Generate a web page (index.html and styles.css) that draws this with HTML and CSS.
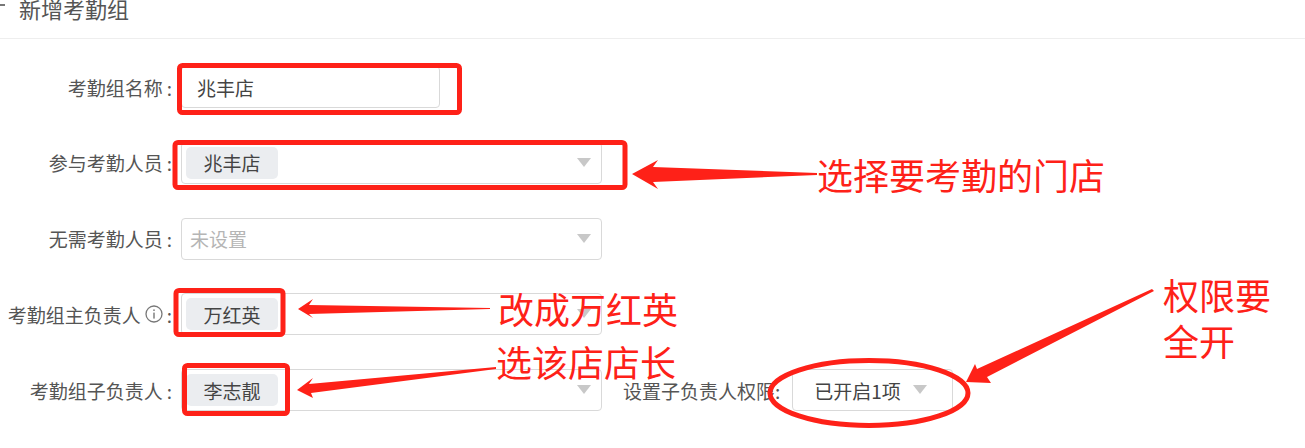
FILE: index.html
```html
<!DOCTYPE html>
<html lang="zh-CN">
<head>
<meta charset="utf-8">
<title>新增考勤组</title>
<link rel="stylesheet" href="styles.css">
</head>
<body>
<div class="page">
  <header class="head"><span class="back"></span><h1 class="title">新增考勤组</h1></header>
  <form class="form">
    <div class="row">
      <div class="label">考勤组名称<span class="colon">:</span></div>
      <div class="field input"><span class="value">兆丰店</span></div>
    </div>
    <div class="row">
      <div class="label">参与考勤人员<span class="colon">:</span></div>
      <div class="field select"><span class="tag">兆丰店</span><span class="caret"></span></div>
    </div>
    <div class="row">
      <div class="label">无需考勤人员<span class="colon">:</span></div>
      <div class="field select"><span class="placeholder">未设置</span><span class="caret"></span></div>
    </div>
    <div class="row">
      <div class="label">考勤组主负责人<svg class="info" viewBox="0 0 18 18" width="18" height="18"><circle cx="9" cy="9" r="8" fill="none" stroke="#777" stroke-width="1.3"/><rect x="8.3" y="7.6" width="1.4" height="6" fill="#777"/><rect x="8.3" y="4.4" width="1.4" height="1.6" fill="#777"/></svg><span class="colon">:</span></div>
      <div class="field select"><span class="tag">万红英</span><span class="caret"></span></div>
    </div>
    <div class="row">
      <div class="label">考勤组子负责人<span class="colon">:</span></div>
      <div class="field select"><span class="tag">李志靓</span><span class="caret"></span></div>
      <div class="sub-label">设置子负责人权限:</div>
      <div class="field small"><span class="value-sm">已开启1项</span><span class="caret"></span></div>
    </div>
  </form>

  <svg class="marks" viewBox="0 0 1305 448" width="1305" height="448">
    <g fill="none" stroke="#fe2118" stroke-width="5">
      <rect x="179.5" y="65.5" width="280" height="47" rx="3"/>
      <rect x="175" y="142.5" width="450" height="45" rx="3"/>
      <rect x="176" y="290.5" width="107" height="44" rx="3"/>
      <rect x="184.5" y="365.5" width="103" height="48" rx="3"/>
      <ellipse cx="869" cy="393" rx="99" ry="32.5"/>
    </g>
    <g fill="#fe2118">
      <polygon points="632,174 658,160 653,167 817,173 817,175 653,182 658,189"/>
      <polygon points="298,309 313,299 309,305 490,308 490,309 309,314 313,318"/>
      <polygon points="297,390 313,378 309,384 496,367 496,369 311,393 313,398"/>
      <polygon points="966,382 975,364 977,369 1152,289 1154,291 987,377 991,383"/>
    </g>
  </svg>
  <div class="note note-a">选择要考勤的门店</div>
  <div class="note note-b">改成万红英</div>
  <div class="note note-c">选该店店长</div>
  <div class="note note-d">权限要<br>全开</div>
</div>
</body>
</html>
```

FILE: styles.css
```css
* { box-sizing: border-box; }
html, body { margin: 0; padding: 0; background: #fff; }
body { font-family: "Noto Sans CJK SC", "Liberation Sans", sans-serif; color: #444; }
.page { position: relative; width: 1305px; height: 448px; overflow: hidden; }
.head { display: flex; align-items: flex-start; height: 39px; border-bottom: 1px solid #eeeeee; }
.back { width: 5px; height: 2px; background: #777; margin-top: 4px; }
.title { margin: -7px 0 0 14px; font-size: 22px; line-height: 30px; font-weight: 400; color: #555; }
.form { display: flex; flex-direction: column; gap: 33.75px; padding-top: 27px; }
.row { display: flex; align-items: center; height: 42px; }
.label { width: 172px; text-align: right; font-size: 19px; color: #555; white-space: nowrap; display: flex; justify-content: flex-end; align-items: center; }
.colon { margin-left: 4px; }
.info { margin: 0 0 0 4px; }
.field { position: relative; display: flex; align-items: center; height: 42px; margin-left: 9px; border: 1px solid #d9d9d9; border-radius: 4px; background: #fff; font-size: 19px; }
.input { width: 259px; padding-left: 15px; }
.select { width: 421px; padding-left: 4px; }
.value { color: #444; }
.tag { display: flex; align-items: center; justify-content: center; width: 92px; height: 32px; background: #ebedf0; border-radius: 5px; color: #444; }
.placeholder { padding-left: 4px; color: #b5b5b5; }
.caret { position: absolute; right: 10px; top: 15px; width: 0; height: 0; border-left: 7px solid transparent; border-right: 7px solid transparent; border-top: 9px solid #c8c8c8; }
.sub-label { margin-left: 21px; font-size: 19px; color: #555; white-space: nowrap; }
.small { width: 161px; margin-left: 12px; padding-left: 21px; }
.small .caret { right: 25px; }
.value-sm { color: #444; }
.marks { position: absolute; left: 0; top: 0; pointer-events: none; }
.note { position: absolute; font-size: 36px; line-height: 47px; color: #fe2118; white-space: nowrap; }
.note-a { left: 817px; top: 151px; }
.note-b { left: 498px; top: 285px; }
.note-c { left: 496px; top: 338px; }
.note-d { left: 1163px; top: 271px; line-height: 46px; }
```
